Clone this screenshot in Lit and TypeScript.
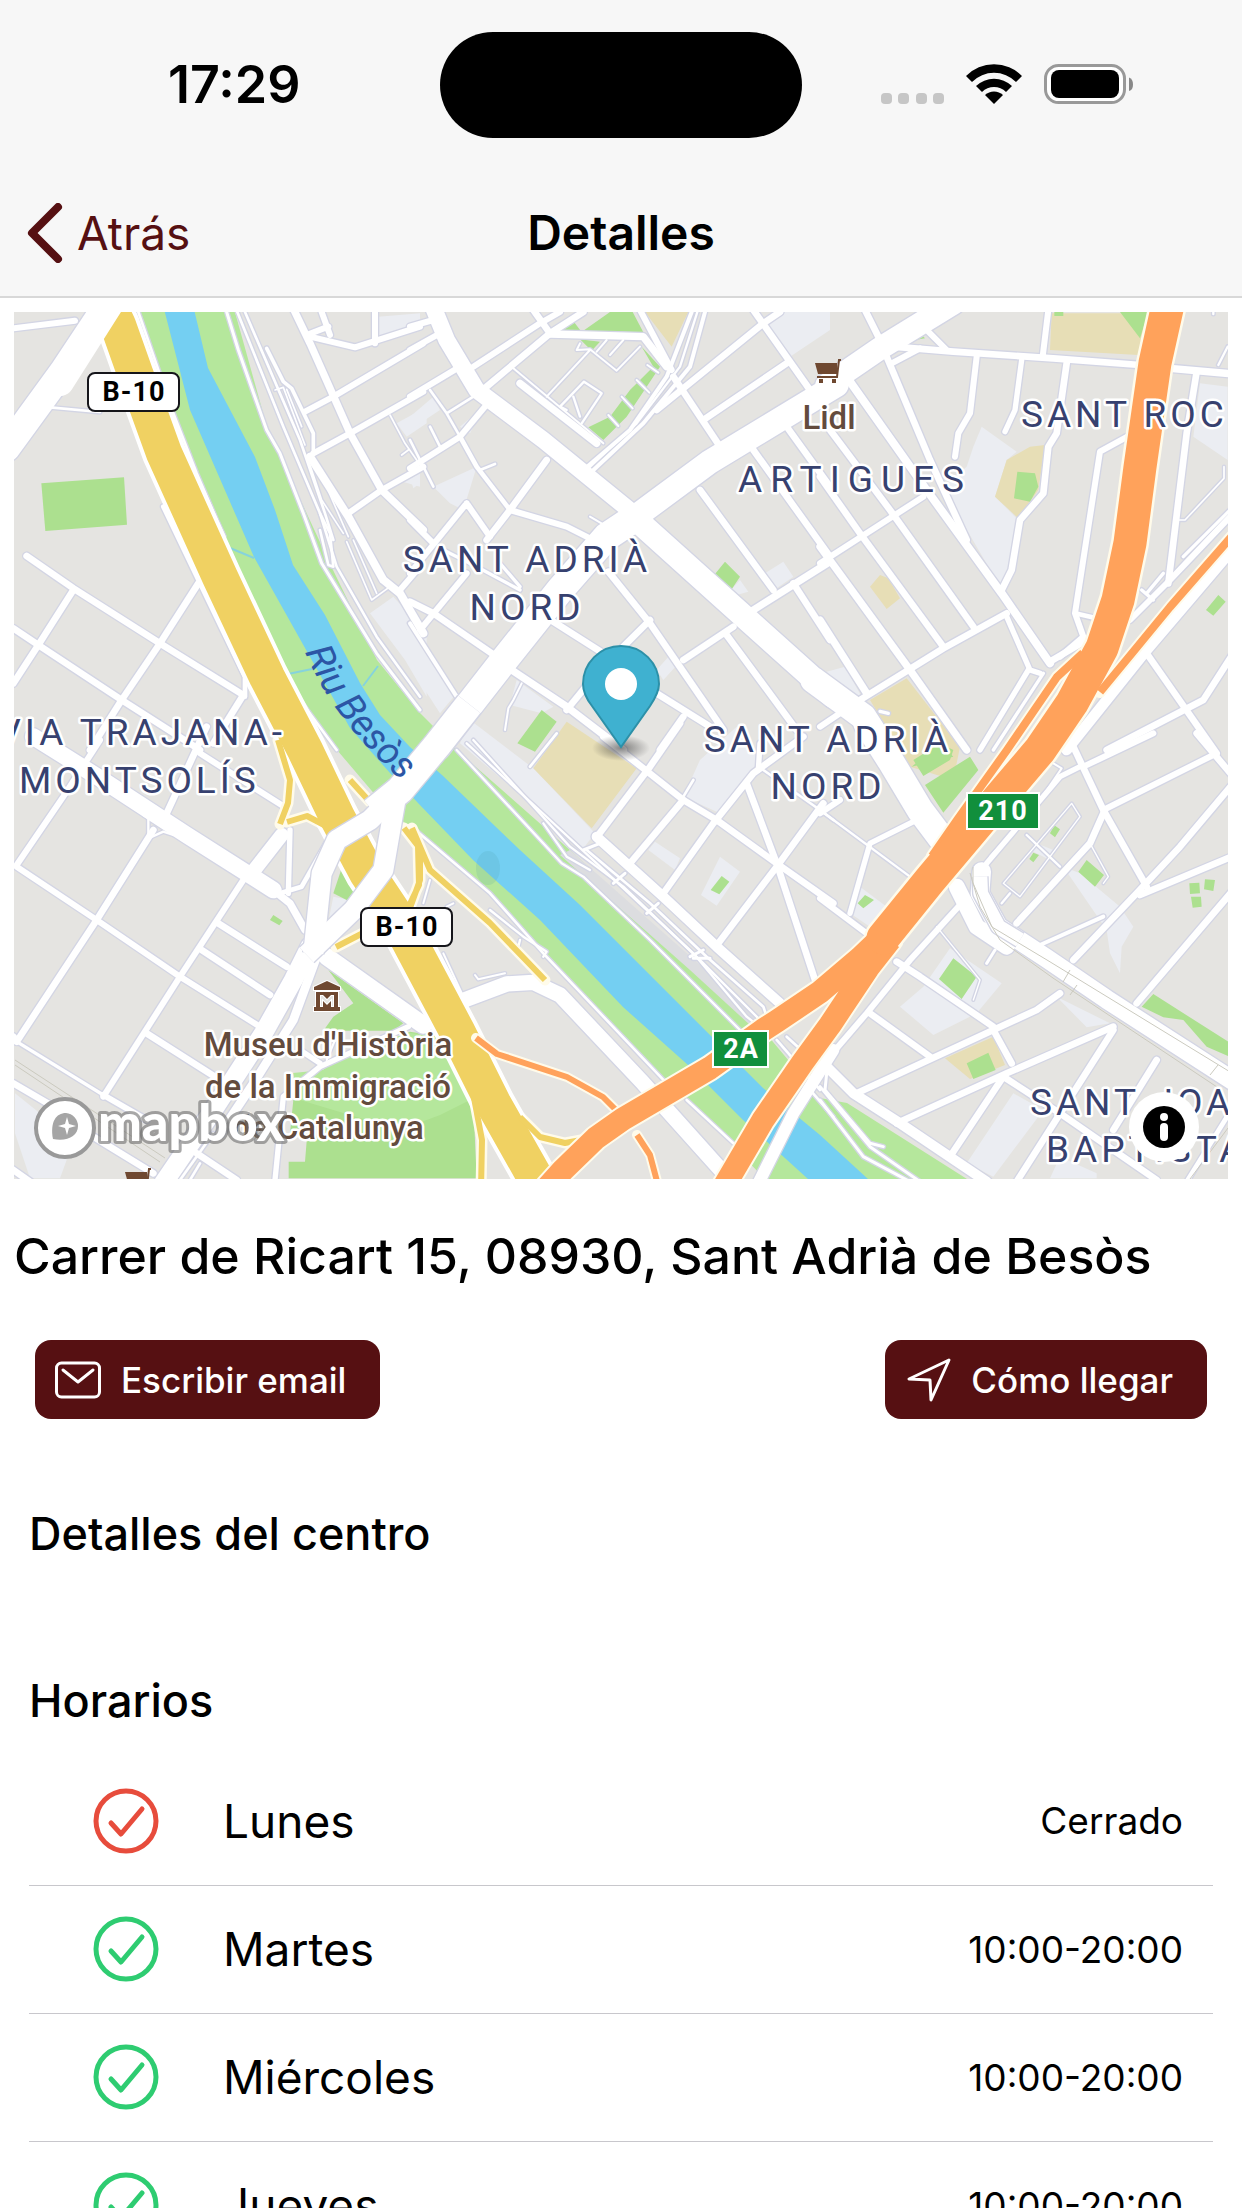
import { LitElement, html, svg, css } from "lit";
import { customElement, property } from "lit/decorators.js";

type Road = [number, string];

/* A map tile. Its geometry is stored at three units per map pixel. */
interface Tile {
  x: number;
  y: number;
  grey?: string;
  sand?: string;
  green?: string;
  roads: Road[];
  over?: Road[];
}

const TILES: Tile[] = [
  {
    x: 0,
    y: 300,
    grey: "M1110,940L1180,890L1280,1000L1280,1190L1215,1080ZM1135,50L1260,40L1260,75L1135,110ZM1190,370L1280,320V370L1220,410ZM1190,540L1260,500V560Z",
    green: "M124,550L372,532L381,674L136,693Z",
    roads: [
      [80, "M320,16L190,212L20,445"],
      [18, "M40,85L225,62"],
      [8, "M150,322L300,336"],
      [20, "M80,768L220,865L480,1030L730,1185"],
      [20, "M220,870L115,1035L40,1150"],
      [20, "M595,850L480,1030L365,1200L270,1350"],
      [20, "M40,985L115,1035L365,1200L600,1350"],
      [20, "M730,1185L640,1330"],
      [14, "M490,620L600,850L735,1130L735,1190"],
      [8, "M415,36L520,340L590,520L650,660L672,708"],
      [8, "M650,690L760,920L870,1160L1010,1350"],
      [9, "M680,36L715,150L800,390L840,460L910,640L965,790L1130,1060L1260,1230"],
      [8, "M712,36L850,380L960,640L1010,800L1130,1010L1260,1190"],
      [8, "M735,36L900,420L975,640L1000,720"],
      [8, "M960,640L990,700L1000,800L985,795L960,690"],
      [11, "M800,145L850,245L875,265L940,400L940,460"],
      [5, "M825,270L850,262L915,435M860,268L905,380"],
      [22, "M880,26L930,130L1050,400L1145,570L1270,690"],
      [18, "M930,110L1065,142L1260,80"],
      [18, "M965,36L990,105M920,105L985,80"],
      [18, "M1125,36L1125,130"],
      [18, "M915,335L1000,290L1270,130"],
      [18, "M940,460L1050,400L1270,275"],
      [18, "M1045,640L1145,570L1270,500"],
      [24, "M930,470L1045,650L1150,840L1200,880L1270,1000"],
      [5, "M1040,725L1115,900L1170,860M1060,720L1130,880"],
      [5, "M925,480L965,600L1030,700M945,480L1045,710"],
      [5, "M1170,345L1215,430L1250,480M1205,465L1225,450"],
      [18, "M1200,870L1260,800"],
    ],
  },
  {
    x: 410,
    y: 300,
    grey: "M0,960L140,1180L90,1240L0,1100ZM1070,80L1110,36H1260V90L1140,170ZM1065,820L1120,785L1150,830L1100,865ZM320,1140L430,1220L395,1240L300,1215ZM70,560L200,500L160,630L120,610ZM0,350L70,290L90,330L0,390ZM150,380L220,320L180,400ZM965,868L990,840L1015,875L980,885ZM740,1110L780,1065L810,1085L760,1140ZM0,530L30,550L10,565Z",
    sand: "M705,36H835L785,140Z",
    green:
      "M430,90L480,50L512,92ZM520,92L600,36H668L700,97ZM510,118L570,125L545,152ZM695,140L750,200L650,350L580,420L535,382L600,350L660,270L730,200ZM945,785L990,830L965,868L915,822ZM395,1230L440,1265L375,1355L322,1330Z",
    roads: [
      [50, "M65,10L110,120L200,270L400,420L670,640"],
      [70, "M680,660L980,930L1270,1190"],
      [72, "M1280,255L900,485L670,655"],
      [84, "M680,650L590,710L450,870L275,1090L80,1340"],
      [18, "M190,200L390,70L450,36"],
      [20, "M230,260L420,100L520,36"],
      [22, "M420,102L700,110L770,200"],
      [20, "M370,30L420,100"],
      [18, "M0,150L90,100M0,80L70,60M0,290L150,200"],
      [18, "M0,505L150,410L225,320"],
      [14, "M150,410L200,500L300,630"],
      [20, "M410,480L300,630L230,720"],
      [18, "M300,630L470,680L540,715"],
      [8, "M60,270L110,340L150,410M0,420L70,560M60,380L90,440M110,340L190,290M210,510L255,492"],
      [18, "M0,660L70,730M170,610L0,820M170,610L240,710"],
      [10, "M100,750L200,800L330,870M270,790L330,860"],
      [18, "M170,820L30,990"],
      [20, "M0,905L70,940L260,1070"],
      [12, "M0,970L140,1190"],
      [22, "M305,1110L470,1220L640,1350"],
      [20, "M470,1230L560,1120M640,1040L720,960"],
      [20, "M430,965L580,1060"],
      [20, "M595,815L720,970L940,1290"],
      [20, "M820,1080L970,980"],
      [20, "M950,1005L1160,1290"],
      [20, "M740,1180L900,1280"],
      [20, "M820,1250L750,1350"],
      [20, "M870,570L1090,870"],
      [22, "M1030,930L1260,785"],
      [20, "M1150,850L1260,1020"],
      [20, "M1030,450L1260,770M1130,380L1260,560"],
      [20, "M740,330L1060,70L1110,36"],
      [20, "M880,360L1130,190"],
      [20, "M1030,30L1200,270"],
      [20, "M790,230L930,440"],
      [18, "M690,30L785,210"],
      [12, "M845,36L770,230L660,390L520,510"],
      [7, "M862,36L810,200L680,370L530,510"],
      [12, "M885,36L840,200L700,370L540,520"],
      [22, "M330,250L560,430"],
      [6, "M310,205L580,430M540,150L410,290M510,130L500,150L540,148L620,212L690,140M600,165L640,120M560,155L590,120"],
      [6, "M595,345L625,378M635,290L668,325M680,240L718,278M712,195L745,218"],
      [7, "M515,370L575,280L522,245L450,320L470,330M510,350L490,290"],
      [6, "M540,650L600,685M285,1290L295,1225L310,1200L335,1150"],
    ],
  },
  {
    x: 820,
    y: 300,
    grey: "M485,380L590,455L560,480L525,590L595,660L575,810L540,860L400,620L370,560L440,500L460,440ZM1140,250L1223,260V480L1120,410ZM20,1115L75,1100L125,1190L100,1190Z",
    sand: "M695,40H985L955,165L690,150ZM630,440L675,435L655,570L595,655L525,590L560,480ZM180,825L205,835L240,895L200,927L150,860ZM150,1200L260,1135L420,1340L400,1440L270,1400Z",
    green:
      "M592,515L645,520L655,560L630,605L582,595ZM900,36H985L960,115ZM1195,885L1217,905L1180,947L1158,930ZM703,36H730V48H703ZM300,98L315,115L285,120ZM275,1400L360,1330L400,1370Z",
    roads: [
      [68, "M400,10L180,145L20,255"],
      [20, "M135,30L180,120"],
      [20, "M200,170L330,480L440,720"],
      [24, "M90,245L320,570L545,880L690,1090"],
      [20, "M30,390L210,630L460,980"],
      [20, "M0,530L120,700L370,1040"],
      [22, "M0,740L270,1110L440,1350"],
      [22, "M0,960L140,1180"],
      [18, "M0,790L310,590"],
      [20, "M120,1200L370,1045L560,940"],
      [20, "M220,140L400,155L700,175L960,195"],
      [22, "M1050,205L1240,222"],
      [18, "M685,30L668,170M215,190L300,145M310,80L380,150"],
      [18, "M470,170L450,340L415,400L405,470"],
      [16, "M605,180L585,330L555,395"],
      [20, "M740,190L710,400L685,440L670,580L600,660L575,810L545,870"],
      [18, "M940,400L840,455L765,940L790,1010L720,1070"],
      [14, "M765,940L830,955"],
      [20, "M1130,215L1100,400L1045,850"],
      [16, "M560,950L630,1110L660,1120"],
      [16, "M625,1110L480,1350"],
      [20, "M690,1085L800,1020"],
      [10, "M670,1120L520,1350"],
      [10, "M1240,620L1090,770"],
      [5, "M1212,500L1212,535L1095,660L1078,660"],
      [32, "M1240,745L980,1050L740,1350"],
      [18, "M1240,640L1050,840L930,960"],
      [10, "M965,870L1000,900M1030,820L980,880"],
      [20, "M980,1060L1190,1360"],
      [20, "M860,1350L1150,1200L1240,1060"],
      [18, "M0,1280L60,1240"],
      [7, "M1223,140L1195,195M1180,30V42"],
      [78, "M-20,1140L130,1250L200,1360"],
      [10, "M180,1234L205,1240"],
    ],
  },
  {
    x: 0,
    y: 740,
    grey: "M45,1060L170,1160L200,1260L180,1315H90L45,1180ZM1000,470L1050,480L980,570Z",
    green:
      "M985,690L1210,850L1180,872H970L1000,830L1060,790ZM880,1080L970,990L1230,875L1330,890L1420,1090L1430,1315H866V1265H915L922,1180H870ZM1030,370L1075,460L1050,485L1000,460ZM820,525L848,543L838,556L810,540Z",
    roads: [
      [50, "M100,-10L300,115L560,285L820,450"],
      [18, "M50,375L190,170L300,0"],
      [18, "M50,380L290,540L540,710L780,860"],
      [20, "M620,-40L500,220M460,270L290,540L50,905L40,890"],
      [7, "M430,225L445,235V300M445,295L490,275L520,285"],
      [18, "M730,420L540,710L310,1070"],
      [42, "M845,285L755,400"],
      [16, "M870,270L865,460"],
      [14, "M840,460L905,440L985,300"],
      [18, "M600,40L860,205"],
      [22, "M820,450L870,490L915,570"],
      [20, "M655,550L860,680M605,630L810,765M440,880L660,1020"],
      [10, "M50,905L310,1065"],
      [18, "M310,1065L440,1140"],
      [20, "M40,1030L160,1100M280,1190L460,1300M40,1290L90,1325M590,1240L710,1320"],
      [56, "M930,620L880,720L790,880L640,1110L490,1330"],
      [26, "M950,650L880,840L760,1030L660,1180"],
      [8, "M640,1180L540,1320M600,1270L570,1320"],
      [52, "M980,650L1270,855"],
      [16, "M1225,860L960,980L850,1070L825,1320"],
      [16, "M900,930L960,970"],
      [6, "M1005,900L980,960"],
    ],
    over: [
      [84, "M1408,-107L1312,15L1200,150L1120,215"],
      [60, "M1190,160L1110,240L1010,300L965,400L940,640"],
      [60, "M1190,160L1150,390L1060,510L920,645"],
    ],
  },
  {
    x: 410,
    y: 740,
    grey: "M180,-60L370,85L555,280L520,325L150,10ZM870,60L980,-40L1050,60L930,220L820,170ZM930,350L990,395L920,497L873,465ZM735,305L810,355L795,390L715,330Z",
    sand: "M470,-55L680,85L545,265L370,85Z",
    green: "M935,408L958,425L928,463L902,450Z",
    roads: [
      [7, "M170,10L420,240L560,370L850,640L1010,830L1060,870"],
      [7, "M140,30L400,310L455,370L520,410L720,600L990,870"],
      [7, "M190,0L480,320L640,440L880,670L1050,840"],
      [7, "M400,250L470,350L540,390"],
      [30, "M560,290L760,470L920,620L1110,790"],
      [8, "M530,330L720,490L890,650L1060,800L1070,830"],
      [8, "M10,265L240,460L400,640L770,1030"],
      [8, "M830,1080L970,1210"],
      [7, "M240,510L340,590L410,635L400,650M330,600L325,620"],
      [46, "M150,785L290,732L370,727L450,765L700,1030L960,1320"],
      [20, "M565,285L720,80L810,-50"],
      [20, "M580,-10L820,180L920,240L1100,370L1270,490"],
      [20, "M660,370L820,180"],
      [20, "M760,460L910,250L1030,100L1180,-10"],
      [20, "M925,610L1100,380L1240,190"],
      [20, "M1010,130L1100,370L1215,720"],
      [16, "M1050,10L1045,90"],
      [8, "M1060,90L1230,210L1270,240M360,80L440,-20M850,120L820,170"],
      [9, "M610,430L645,400M710,520L745,490M840,650L880,630M520,330L570,310M850,655H900"],
      [6, "M195,705L205,718L285,700M100,640L160,770M60,420L40,490M110,500L130,490"],
      [8, "M1100,900L1230,1050M1130,890L1240,990M1200,1050L1270,1130"],
      [36, "M1270,930L1150,1120L1045,1330"],
    ],
  },
  {
    x: 820,
    y: 740,
    grey: "M390,625L545,730L470,820L340,885L240,800L310,740ZM580,1060L670,1110L520,1310L440,1270ZM730,380L780,400L900,500L940,560L905,620L900,700L870,640L860,570ZM710,770L870,850L800,862ZM690,1315L720,1250L830,1300V1315ZM120,440L200,500L150,560L90,520ZM650,310L700,330L690,360L630,330Z",
    sand: "M375,955L520,890L555,975L450,1017Z",
    green:
      "M800,360L852,405L825,440L775,395ZM400,655L470,710L425,777L357,717ZM505,938L527,990L460,1017L440,970ZM1000,762L1240,915V955L1160,920L1090,840L1030,832L965,800ZM1108,430L1138,428L1140,460L1110,462ZM1155,418L1185,420L1180,453L1152,448ZM1113,470L1143,470L1145,500L1118,503ZM703,256L720,268L705,292L690,280ZM640,338L657,345L640,367L628,357ZM135,465L162,480L130,505L113,490ZM280,60L360,10L400,30L390,60L310,108ZM315,135L450,50L475,90L370,218Z",
    roads: [
      [80, "M140,-50L210,60L300,210L390,330"],
      [48, "M410,440L470,560L560,620"],
      [56, "M485,395L480,460L535,560L680,655L860,778L1250,1030"],
      [20, "M760,20L850,210L980,440"],
      [18, "M790,80L1000,-20M850,210L1180,45"],
      [20, "M1130,-20L1240,110"],
      [20, "M1240,130L1080,320L950,460L760,660"],
      [20, "M1240,348L960,465M850,220L810,310L590,550M1240,450L950,790"],
      [16, "M780,80L720,110L500,370"],
      [6, "M700,70L725,85L640,210L510,350"],
      [12, "M660,615L850,530"],
      [18, "M415,500L270,660L140,820L20,960"],
      [20, "M230,665L300,710L520,860M150,820L330,950"],
      [30, "M-20,940L100,1060L240,1150L500,1325"],
      [20, "M110,1060L520,870L650,810L720,760"],
      [20, "M230,1150L560,1000L880,860M520,870L575,970M550,1010L390,1250"],
      [20, "M550,1010L720,1120L1010,1320"],
      [20, "M880,870L590,1325M1010,960L880,1170"],
      [16, "M290,240L150,310L90,520"],
      [18, "M0,475L140,580M0,220L60,180"],
      [7, "M0,210L270,410M620,285L720,380M545,490L570,460"],
      [9, "M500,670L525,630M0,1040L150,1220L300,1325M0,1080L130,1250L270,1325M20,1000L15,1050L150,1210L190,1220"],
      [14, "M1240,1100L1100,1325"],
      [4, "M550,430L755,190L780,230L600,470ZM810,310L865,410L850,430M350,560L480,720L460,780"],
    ],
    over: [[44, "M480,410L482,460L535,560L600,600"]],
  },
];

const tiled = (draw: (t: Tile) => unknown) =>
  TILES.map(
    (t) => svg`<g transform="translate(${t.x} ${t.y}) scale(0.33333)">${draw(t)}</g>`,
  );

const strokes = (roads: Road[] | undefined, extra: number) =>
  (roads ?? []).map(([w, d]) => svg`<path d=${d} stroke-width=${w + extra} />`);

const YELLOW =
  "M104,296L118,325L135,373L164,453L220,577L267,677L305,750L337,817L367,873L397,918L458,1033L493,1103L545,1195";
const YELLOW_RAMPS =
  "M278,740L290,780L288,803L280,824M287,822L307,816L326,826M350,780L370,802M412,828L430,870L490,923L545,980M420,850V880L410,908M404,828L418,846L419,885L408,908M336,947L365,932M474,1098L482,1140L481,1190M520,1117L540,1137L565,1143L592,1138";
const ORANGE = "M1169,300L1155,363L1140,467L1130,543L1118,600L1102,648L1072,703L1040,750L983,817L930,880L883,938";
const ORANGE_FORKS =
  "M905,915L860,958L820,992L777,1021L763,1030L710,1068L623,1119L596,1138L563,1170L545,1190M890,940L868,968L830,1025L803,1062L763,1120L722,1190";
const ORANGE_THIN = "M1232,536L1170,607L1133,652L1100,692M1083,653L1057,677L1007,750L957,820L932,856";
const ORANGE_CURVE = "M476,1038L497,1054L567,1077L603,1097L623,1117M637,1135L650,1155L658,1185";

@customElement("city-map")
class CityMap extends LitElement {
  static styles = css`
    :host {
      display: block;
      position: relative;
    }
    .canvas {
      display: block;
      width: 100%;
      height: auto;
    }
    .line {
      fill: none;
      stroke-linecap: round;
      stroke-linejoin: round;
    }
    .flat {
      fill: none;
      stroke-linejoin: round;
    }
    .casing {
      stroke: #d3d5e4;
    }
    .white {
      stroke: #fff;
    }
    .yellow {
      stroke: #f0d162;
    }
    .orange {
      stroke: #ffa25b;
    }
    .cream {
      stroke: #fffbea;
    }
    .label {
      font-family: Roboto, "Noto Sans", sans-serif;
      paint-order: stroke;
      stroke: #fff;
      stroke-width: 5px;
      stroke-linejoin: round;
      text-anchor: middle;
    }
    .area {
      font-size: 37px;
      letter-spacing: 4px;
      fill: #37416f;
    }
    .wide {
      letter-spacing: 8px;
    }
    .start {
      text-anchor: start;
    }
    .end {
      text-anchor: end;
    }
    .poi {
      font-size: 33px;
      font-weight: 500;
      fill: #634b3d;
    }
    .water {
      font-size: 38px;
      font-style: italic;
      fill: #2c56a5;
      stroke: none;
      text-anchor: start;
    }
    .shield {
      font-family: Roboto, "Open Sans", sans-serif;
      font-size: 27px;
      font-weight: 700;
      letter-spacing: 1px;
      text-anchor: middle;
    }
    .brand {
      font-family: Lato, sans-serif;
      font-size: 52px;
      font-weight: 900;
      fill: #fff;
      stroke: #6e6e6e;
      stroke-opacity: 0.6;
      stroke-width: 6px;
      paint-order: stroke;
      stroke-linejoin: round;
    }
    .info {
      position: absolute;
      right: 29px;
      bottom: 17px;
      display: grid;
      place-items: center;
      width: 70px;
      height: 70px;
      padding: 0;
      border: 0;
      border-radius: 50%;
      background: #fff;
    }
    .info svg {
      width: 42px;
      height: 42px;
    }
  `;

  render() {
    return html`
      <svg class="canvas" viewBox="14 312 1214 867" role="img" aria-label="Mapa">
        <defs>
          <radialGradient id="shade">
            <stop offset="0" stop-color="#333" stop-opacity="0.6" />
            <stop offset="1" stop-color="#333" stop-opacity="0" />
          </radialGradient>
          <path id="course" d="M305,652Q336,728 420,796" />
        </defs>
        <rect x="14" y="312" width="1214" height="867" fill="#e5e4e1" />
        <g fill="#ebedf2">${tiled((t) => svg`<path d=${t.grey ?? ""} />`)}</g>
        <g fill="#e7deb6">${tiled((t) => svg`<path d=${t.sand ?? ""} />`)}</g>
        <path
          fill="#b5e79c"
          d="M135,305L167,410L180,457L217,527L263,633L293,693L337,750L377,797L410,828L475,880L543,953L677,1093L730,1143L765,1179H967L847,1103L820,1098L763,1030L693,963L570,850L460,753L420,713L377,660L333,570L313,527L267,427L233,305Z"
        />
        <g fill="#ace08f">${tiled((t) => svg`<path d=${t.green ?? ""} />`)}</g>
        <path fill="#b5e79c" d="M293,1073L323,1070L350,1050L410,1033L440,1037L470,1100L440,1115L400,1130L300,1100Z" />
        <path fill="#dcdde0" d="M570,850L700,965L765,1020L750,1025L690,970L560,855Z" />
        <path
          fill="#74cff2"
          d="M163,305L190,410L254,557L305,648L350,728L390,773L418,803L473,860L540,920L623,1007L688,1065L743,1120L808,1179H868L820,1135L763,1088L710,1035L650,975L580,905L520,850L442,775L410,747L380,715L360,683L325,615L293,565L275,510L255,457L208,368L193,305Z"
        />
        <ellipse cx="488" cy="868" rx="12" ry="17" fill="#4c9aa0" opacity="0.16" />
        <path class="flat" stroke="#86d3dc" stroke-width="2" d="M230,548L254,558M288,674L312,669M378,666L363,686" />

        <g class="line casing">${tiled((t) => strokes(t.roads, 8))}</g>
        <g class="line white">${tiled((t) => strokes(t.roads, 0))}</g>

        <path class="line cream" stroke-width="11" d=${YELLOW_RAMPS} />
        <path class="line white" stroke-width="44" d=${YELLOW} />
        <path class="line yellow" stroke-width="36" d=${YELLOW} />
        <path class="flat yellow" stroke-width="6" d=${YELLOW_RAMPS} />
        <path class="line white" stroke-width="28" d="M112,300L60,382" />

        <g class="flat casing">${tiled((t) => strokes(t.over, 8))}</g>
        <g class="flat white">${tiled((t) => strokes(t.over, 0))}</g>
        <g class="flat" stroke="#cbcabf" stroke-width="1">
          <path
            d="M973,867V883L992,927L1047,960L1240,1078M970,873L980,907L1000,940L1053,978L1217,1087M15,1060L165,1158M15,1065L160,1162M1063,982L1070,970M1070,995L1077,985M1210,1075L1218,1065M1228,1128L1190,1179"
          />
        </g>

        <path class="line cream" stroke-width="10" d=${ORANGE_CURVE} />
        <path class="flat orange" stroke-width="6" d=${ORANGE_CURVE} />
        <path class="line cream" stroke-width="12" d=${ORANGE_THIN} />
        <path class="line cream" stroke-width="27" d=${ORANGE_FORKS} />
        <path class="line cream" stroke-width="38" d=${ORANGE} />
        <path class="flat orange" stroke-width="8" d=${ORANGE_THIN} />
        <path class="flat orange" stroke-width="23" d=${ORANGE_FORKS} />
        <path class="line orange" stroke-width="33" d=${ORANGE} />

        <text class="label area" x="527" y="572">SANT ADRIÀ</text>
        <text class="label area" x="527" y="620">NORD</text>
        <text class="label area" x="828" y="752">SANT ADRIÀ</text>
        <text class="label area" x="828" y="799">NORD</text>
        <text class="label area wide" x="855" y="492">ARTIGUES</text>
        <text class="label area start" x="1021" y="427">SANT ROC</text>
        <text class="label area end" x="286" y="745">VIA TRAJANA-</text>
        <text class="label area start" x="19" y="793">MONTSOLÍS</text>
        <text class="label area start" x="1030" y="1115">SANT JOAN</text>
        <text class="label area start" x="1046" y="1162">BAPTISTA</text>
        <text class="label poi" x="829" y="429">Lidl</text>
        <text class="label poi" x="328" y="1056">Museu d'Història</text>
        <text class="label poi" x="328" y="1098">de la Immigració</text>
        <text class="label poi" x="328" y="1139">de Catalunya</text>
        <text class="label water"><textPath href="#course">Riu Besòs</textPath></text>

        <g id="cart" fill="#6f4830">
          <path d="M815,363H837L838,374H818Z" />
          <path fill="none" stroke="#6f4830" stroke-width="2" d="M841,360H839L837,377H817" />
          <path d="M819,379H823V383H819ZM832,379H836V383H832Z" />
        </g>
        <use href="#cart" x="-690" y="809" />
        <g fill="#6f4830" stroke="#fff" stroke-width="2" paint-order="stroke">
          <path d="M314,990V987L327,981L340,987V990Z" />
          <path
            fill-rule="evenodd"
            d="M316,992H338V1007H340V1011H314V1007H316ZM320,1007H323V1001L327,1005L331,1001V1007H334V995H331L327,999L323,995H320Z"
          />
        </g>

        <g fill="#fff" stroke="#15151a" stroke-width="2">
          <rect x="88" y="373" width="91" height="38" rx="7" />
          <rect x="361" y="908" width="91" height="38" rx="7" />
        </g>
        <text class="shield" x="134" y="401">B-10</text>
        <text class="shield" x="407" y="936">B-10</text>
        <g fill="#118f3c" stroke="#fff" stroke-width="2">
          <rect x="967" y="793" width="72" height="36" />
          <rect x="713" y="1031" width="55" height="36" />
        </g>
        <g fill="#fff">
          <text class="shield" x="1003" y="820">210</text>
          <text class="shield" x="741" y="1058">2A</text>
        </g>

        <ellipse cx="621" cy="748" rx="29" ry="13" fill="url(#shade)" />
        <path
          d="M621,747L592,706C585,697 583,691 583,684A38,38 0 0 1 659,684C659,691 656,697 650,706Z"
          fill="#3fb1d0"
          stroke="#2c90a8"
          stroke-width="2"
        />
        <circle cx="621" cy="684" r="16" fill="#fff" />

        <circle cx="65" cy="1128" r="29" fill="#fff" stroke="#999" stroke-width="4" />
        <path d="M53,1139C50,1122 56,1113 66,1113A13,13 0 0 1 78,1126C78,1136 67,1142 53,1139Z" fill="#a5a5a5" />
        <path d="M67,1117L69,1124L76,1126L69,1128L67,1135L65,1128L58,1126L65,1124Z" fill="#fff" />
        <text class="brand" x="98" y="1141">mapbox</text>
      </svg>
      <button class="info" type="button" aria-label="Información">
        <svg viewBox="0 0 42 42" aria-hidden="true">
          <circle cx="21" cy="21" r="21" />
          <circle cx="21" cy="11" r="4" fill="#fff" />
          <rect x="17" y="17" width="8" height="18" rx="4" fill="#fff" />
        </svg>
      </button>
    `;
  }
}

@customElement("status-bar")
class StatusBar extends LitElement {
  static styles = css`
    :host {
      display: grid;
      grid-template-columns: 1fr auto 1fr;
      align-items: center;
      padding: 32px 0;
    }
    .time {
      padding-left: 168px;
      font-size: 52px;
      line-height: 60px;
      font-weight: 600;
    }
    .island {
      width: 362px;
      height: 106px;
      border-radius: 53px;
      background: #000;
    }
    .signals {
      display: flex;
      justify-content: flex-end;
      align-items: center;
      gap: 22px;
      padding-right: 108px;
    }
    .signals svg {
      height: 42px;
    }
  `;

  render() {
    return html`
      <div class="time">17:29</div>
      <div class="island"></div>
      <div class="signals">
        <svg width="63" viewBox="0 0 63 42" fill="#c6c6c6" aria-hidden="true">
          ${[0, 17, 35, 52].map((x) => svg`<rect x=${x} y="29" width="11" height="11" rx="4" />`)}
        </svg>
        <svg width="56" viewBox="0 0 56 42" aria-hidden="true">
          <path d="M0,12A39,39 0 0 1 56,12L50,18A31,31 0 0 0 6,18Z" />
          <path d="M10,22A26,26 0 0 1 46,22L40,28A17,17 0 0 0 16,28Z" />
          <path d="M19,31A13,13 0 0 1 37,31L28,40Z" />
        </svg>
        <svg width="90" viewBox="0 0 90 42" aria-hidden="true">
          <rect x="1.5" y="1.5" width="79" height="37" rx="13" fill="#fff" stroke="#999" stroke-width="3" />
          <rect x="7" y="6" width="68" height="28" rx="8" />
          <path d="M85,13.500Q89,15 89,20.500T85,27Z" fill="#888" />
        </svg>
      </div>
    `;
  }
}

@customElement("opening-hours")
class OpeningHours extends LitElement {
  @property({ attribute: false }) days: { name: string; hours: string; open: boolean }[] = [];

  static styles = css`
    :host {
      display: block;
    }
    .hours {
      width: 100%;
      border-collapse: collapse;
    }
    .row {
      height: 128px;
      border-bottom: 1px solid #c8c7cc;
    }
    .mark {
      width: 194px;
      padding: 0;
    }
    .tick {
      display: block;
      width: 66px;
      height: 66px;
      margin-left: 64px;
      fill: none;
      stroke: #2ecc71;
      stroke-width: 5px;
      stroke-linecap: round;
      stroke-linejoin: round;
    }
    .closed {
      stroke: #e74c3c;
    }
    .day {
      padding: 0;
      text-align: left;
      font-size: 46px;
      font-weight: 400;
    }
    .time {
      padding: 0 30px 0 0;
      text-align: right;
      font-size: 37px;
    }
  `;

  render() {
    return html`
      <table class="hours" aria-label="Horarios">
        <tbody>
          ${this.days.map(
            (d) => html`
              <tr class="row">
                <td class="mark">
                  <svg class="tick ${d.open ? "" : "closed"}" viewBox="0 0 66 66" aria-hidden="true">
                    <circle cx="33" cy="33" r="30" />
                    <path d="M18,35L28,46L49,21" />
                  </svg>
                </td>
                <th class="day" scope="row">${d.name}</th>
                <td class="time">${d.hours}</td>
              </tr>
            `,
          )}
        </tbody>
      </table>
    `;
  }
}

@customElement("app-root")
class AppRoot extends LitElement {
  static styles = css`
    :host {
      display: flex;
      flex-direction: column;
      height: 100vh;
      background: #fff;
      color: #000;
      font-family: Inter, "Liberation Sans", sans-serif;
    }
    .head {
      flex: none;
      background: #f7f7f7;
      border-bottom: 2px solid #d8d8d8;
    }
    .nav {
      display: grid;
      grid-template-columns: 1fr auto 1fr;
      align-items: center;
      height: 126px;
      padding: 0 27px;
    }
    .back {
      display: flex;
      align-items: center;
      justify-self: start;
      gap: 14px;
      color: #561012;
      font-size: 46px;
      line-height: 60px;
      text-decoration: none;
    }
    .title {
      margin: 0;
      font-size: 48px;
      line-height: 60px;
      font-weight: 600;
    }
    .page {
      flex: 1;
      min-height: 0;
      overflow-y: auto;
      scrollbar-width: none;
      padding: 14px 14px 0;
    }
    .address {
      margin: 48px 0 55px;
      font-size: 50px;
      line-height: 58px;
      font-weight: 500;
    }
    .actions {
      display: flex;
      justify-content: space-between;
      padding: 0 21px;
    }
    .action {
      display: flex;
      align-items: center;
      gap: 20px;
      height: 79px;
      padding: 0 34px 0 20px;
      border: 0;
      border-radius: 16px;
      background: #561012;
      color: #fff;
      font-family: inherit;
      font-size: 35px;
      font-weight: 500;
    }
    .icon {
      width: 46px;
      height: 46px;
      fill: none;
      stroke: #fff;
      stroke-width: 3px;
      stroke-linecap: round;
      stroke-linejoin: round;
    }
    .section {
      padding: 0 15px;
    }
    .heading {
      margin: 88px 0 0;
      font-size: 45px;
      line-height: 54px;
      font-weight: 500;
    }
    .hours-heading {
      margin: 113px 0 29px;
    }
  `;

  private days = [
    { name: "Lunes", hours: "Cerrado", open: false },
    { name: "Martes", hours: "10:00-20:00", open: true },
    { name: "Miércoles", hours: "10:00-20:00", open: true },
    { name: "Jueves", hours: "10:00-20:00", open: true },
  ];

  render() {
    return html`
      <header class="head">
        <status-bar></status-bar>
        <nav class="nav">
          <a class="back" href="#">
            <svg width="36" height="60" viewBox="0 0 36 60" aria-hidden="true">
              <path
                d="M31,4L5,30L31,56"
                fill="none"
                stroke="#561012"
                stroke-width="8"
                stroke-linecap="round"
                stroke-linejoin="round"
              />
            </svg>
            Atrás
          </a>
          <h1 class="title">Detalles</h1>
        </nav>
      </header>
      <main class="page">
        <city-map></city-map>
        <p class="address">Carrer de Ricart 15, 08930, Sant Adrià de Besòs</p>
        <div class="actions">
          <button class="action" type="button">
            <svg class="icon" viewBox="0 0 46 46" aria-hidden="true">
              <rect x="1.5" y="6" width="43" height="34" rx="5" />
              <path d="M8,13L23,25L38,13" />
            </svg>
            Escribir email
          </button>
          <button class="action" type="button">
            <svg class="icon" viewBox="0 0 46 46" aria-hidden="true">
              <path d="M44,3L4,22L25,23L26,43Z" />
            </svg>
            Cómo llegar
          </button>
        </div>
        <section class="section">
          <h2 class="heading">Detalles del centro</h2>
          <h2 class="heading hours-heading">Horarios</h2>
          <opening-hours .days=${this.days}></opening-hours>
        </section>
      </main>
    `;
  }
}
